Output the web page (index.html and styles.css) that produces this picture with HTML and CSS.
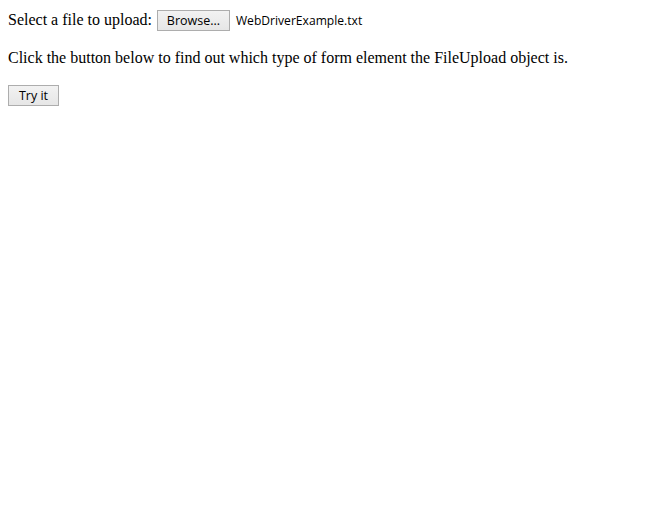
FILE: index.html
```html
<!DOCTYPE html>
<html>
<head>
<meta charset="utf-8">
<link rel="stylesheet" href="styles.css">
</head>
<body>
<div class="upload-row">Select a file to upload: <span class="file-input"><button class="btn browse" type="button">Browse...</button><span class="file-name">WebDriverExample.txt</span></span></div>
<p class="info">Click the button below to find out which type of form element the FileUpload object is.</p>
<button class="btn try" type="button">Try it</button>
</body>
</html>
```

FILE: styles.css
```css
body {
  margin: 8px;
  font-family: "Liberation Serif", "Times New Roman", serif;
  font-size: 16px;
  color: #000;
  background: #fff;
}
.upload-row {
  display: flex;
  align-items: center;
  height: 24px;
  white-space: pre;
}
.file-input {
  display: inline-flex;
  align-items: center;
  gap: 6px;
  margin-left: 1px;
}
.btn {
  font-family: "Open Sans", "Noto Sans", sans-serif;
  font-size: 12.5px;
  color: #000;
  background: linear-gradient(#f2f2f2, #e6e6e6);
  border: 1px solid #adadad;
  border-radius: 0;
  padding: 0 8px;
  height: 21px;
  line-height: 19px;
  margin: 0;
  box-sizing: border-box;
}
.browse {
  width: 73px;
}
.file-name {
  font-family: "Open Sans", "Noto Sans", sans-serif;
  font-size: 12.1px;
}
.info {
  margin: 16px 0 18px;
  line-height: 19px;
}
.try {
  display: block;
  width: 51px;
  height: 21px;
  padding: 0;
}
```
